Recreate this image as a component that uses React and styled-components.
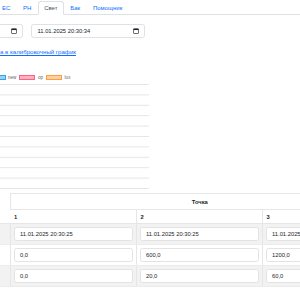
import React from "react";
import styled, { createGlobalStyle } from "styled-components";

const GlobalStyle = createGlobalStyle`
  html, body {
    margin: 0;
    padding: 0;
    background: #fff;
    font-family: "Liberation Sans", Arial, sans-serif;
    color: #212529;
  }
`;

const Page = styled.div`
  width: 300px;
  height: 300px;
  overflow: hidden;
  display: flex;
  flex-direction: column;
`;

const TabBar = styled.div`
  display: flex;
  align-items: flex-end;
  height: 14px;
  margin-left: -4.5px;
  border-bottom: 1px solid #dee2e6;
  flex-shrink: 0;
`;

const Tab = styled.div`
  font-size: 6px;
  line-height: 12px;
  padding: 0 5.4px;
  margin-bottom: -1px;
  color: ${(p) => (p.$active ? "#495057" : "#0d6efd")};
  background: ${(p) => (p.$active ? "#fff" : "transparent")};
  border: 1px solid ${(p) => (p.$active ? "#dee2e6" : "transparent")};
  border-bottom-color: ${(p) => (p.$active ? "#fff" : "transparent")};
  border-radius: 3px 3px 0 0;
  white-space: nowrap;
`;

const DateRow = styled.div`
  display: flex;
  gap: 8px;
  margin-top: 9px;
  margin-left: -91px;
  flex-shrink: 0;
`;

const DateField = styled.div`
  width: 114px;
  height: 14px;
  box-sizing: border-box;
  border: 1px solid #dee2e6;
  border-radius: 2.5px;
  display: flex;
  align-items: center;
  justify-content: space-between;
  padding: 0 5px 0 5.5px;
  font-size: 5.8px;
  color: #212529;
  flex-shrink: 0;
`;

const CalIcon = () => (
  <svg width="6" height="6" viewBox="0 0 12 12">
    <rect x="1" y="1.5" width="10" height="9.5" rx="1" fill="none" stroke="#212529" strokeWidth="1.3" />
    <rect x="1" y="1.5" width="10" height="2.6" fill="#212529" />
  </svg>
);

const Link = styled.a`
  display: block;
  margin-top: 10px;
  font-size: 6.1px;
  line-height: 8px;
  color: #0d6efd;
  text-decoration: underline;
  white-space: nowrap;
  flex-shrink: 0;
`;

const Legend = styled.div`
  display: flex;
  align-items: center;
  gap: 3px;
  margin-top: 19px;
  margin-left: -10.5px;
  height: 5px;
  flex-shrink: 0;
`;

const LegendItem = styled.div`
  display: flex;
  align-items: center;
  gap: 2.5px;
  font-size: 4.6px;
  color: #666;
`;

const Swatch = styled.span`
  display: block;
  width: 16px;
  height: 4.5px;
  box-sizing: border-box;
  background: ${(p) => p.$fill};
  border: 0.5px solid ${(p) => p.$line};
`;

const Chart = styled.svg`
  display: block;
  margin-top: 4px;
  flex-shrink: 0;
`;

const TableWrap = styled.div`
  margin-top: 3px;
  flex-shrink: 0;
`;

const Table = styled.table`
  border-collapse: collapse;
  table-layout: fixed;
  width: 388.5px;
  font-size: 5.8px;
  color: #212529;
`;

const Th = styled.th`
  font-weight: bold;
  text-align: ${(p) => (p.$center ? "center" : "left")};
  height: ${(p) => p.$h}px;
  padding: 0 3.5px;
  box-sizing: border-box;
  border-left: 1px solid #e6e6e6;
  border-top: ${(p) => (p.$noTop ? "none" : "1px solid #e6e6e6")};
  border-bottom: 1px solid #e6e6e6;
  &:first-child {
    border-left: none;
  }
`;

const Row = styled.tr`
  background: ${(p) => (p.$striped ? "#f2f2f2" : "#fff")};
`;

const Td = styled.td`
  height: 21px;
  padding: 0 3px;
  box-sizing: border-box;
  border-left: 1px solid #e6e6e6;
  border-bottom: 1px solid #ececec;
  &:first-child {
    border-left: none;
  }
`;

const CellInput = styled.div`
  height: 14px;
  box-sizing: border-box;
  background: #fff;
  border: 1px solid #e3e3e3;
  border-radius: 2.5px;
  display: flex;
  align-items: center;
  padding-left: 5px;
  white-space: nowrap;
  overflow: hidden;
`;

const legend = [
  { label: "new", fill: "rgba(54,162,235,0.5)", line: "#36a2eb" },
  { label: "ор", fill: "rgba(255,99,132,0.5)", line: "#ff6384" },
  { label: "lux", fill: "rgba(255,159,64,0.5)", line: "#ff9f40" },
];

const rows = [
  ["11.01.2025 20:30:25", "11.01.2025 20:30:25", "11.01.2025 20:30:25"],
  ["0,0", "600,0", "1200,0"],
  ["0,0", "20,0", "60,0"],
];

export default function App() {
  const gridLines = Array.from({ length: 11 }, (_, i) => 0.5 + i * 10.4);
  return (
    <>
      <GlobalStyle />
      <Page>
        <TabBar>
          <Tab>ЕС</Tab>
          <Tab>РН</Tab>
          <Tab $active>Свет</Tab>
          <Tab>Бак</Tab>
          <Tab>Помощник</Tab>
        </TabBar>

        <DateRow>
          <DateField>
            <span />
            <CalIcon />
          </DateField>
          <DateField>
            <span>11.01.2025 20:30:34</span>
            <CalIcon />
          </DateField>
        </DateRow>

        <Link href="#">а в калибровочный график</Link>

        <Legend>
          {legend.map((l) => (
            <LegendItem key={l.label}>
              <Swatch $fill={l.fill} $line={l.line} />
              <span>{l.label}</span>
            </LegendItem>
          ))}
        </Legend>

        <Chart width="149" height="106">
          {gridLines.map((y) => (
            <line key={y} x1="0" x2="149" y1={y} y2={y} stroke="#e6e6e6" strokeWidth="1" />
          ))}
        </Chart>

        <TableWrap>
          <Table>
            <colgroup>
              <col style={{ width: 10.5 }} />
              <col style={{ width: 126 }} />
              <col style={{ width: 126 }} />
              <col style={{ width: 126 }} />
            </colgroup>
            <thead>
              <tr>
                <Th rowSpan={2} $h={30} $noTop />
                <Th colSpan={3} $center $h={16}>Точка</Th>
              </tr>
              <tr>
                <Th $h={14}>1</Th>
                <Th $h={14}>2</Th>
                <Th $h={14}>3</Th>
              </tr>
            </thead>
            <tbody>
              {rows.map((r, i) => (
                <Row key={i} $striped={i % 2 === 0}>
                  <Td />
                  {r.map((v, j) => (
                    <Td key={j}>
                      <CellInput>{v}</CellInput>
                    </Td>
                  ))}
                </Row>
              ))}
            </tbody>
          </Table>
        </TableWrap>
      </Page>
    </>
  );
}
